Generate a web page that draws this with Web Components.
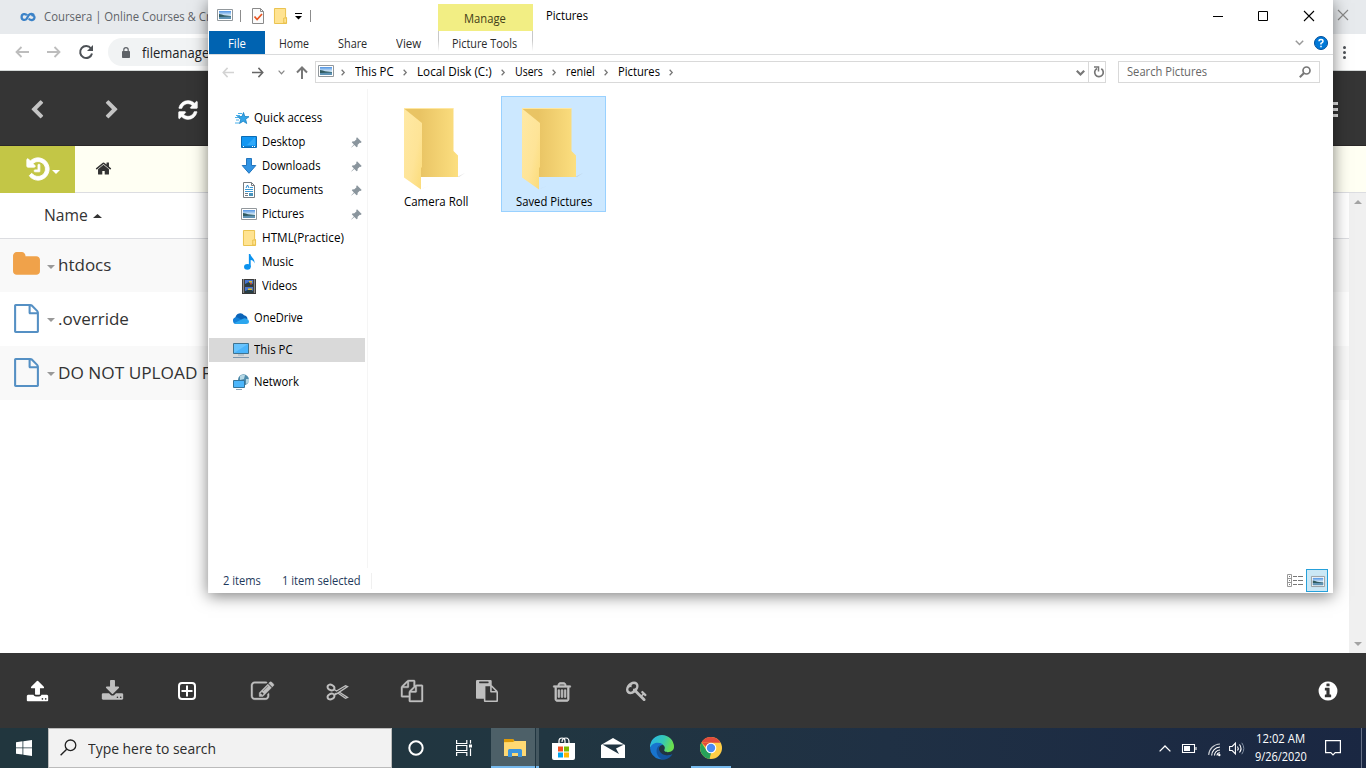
<!DOCTYPE html>
<html lang="en">
<head>
<meta charset="utf-8">
<title>Pictures</title>
<style>
html,body{margin:0;width:1366px;height:768px;overflow:hidden;background:#fff}
body{font-family:"Open Sans","Noto Sans",sans-serif;font-size:12px;color:#000}
</style>
</head>
<body>
<desktop-screen></desktop-screen>
<script>
const picture = `<defs><linearGradient id="s" x2="0" y2="1"><stop stop-color="#4f93e3"/><stop offset=".55" stop-color="#d9ecf8"/><stop offset="1" stop-color="#a9c8d2"/></linearGradient></defs><path d="M.5.5h15v11H.5z" fill="#fff" stroke="#92989c"/><path d="M2 2h12v8H2z" fill="url(#s)"/><path d="M2 5q3 .2 5 1.300l7 .700V8H2z" fill="#2f5a5f"/><path d="M2 8q6-.6 12-.5V10H2z" fill="#5f93b4"/>`;
const smallFolder = `<path d="M.5 .5h12v9h1v6H.5z" fill="#ffe391" stroke="#e9c14b"/><path d="M10.5 15V10h3v5z" fill="#ffe391" stroke="#e9c14b"/>`;
const fa = (d,s=0) => ['0 0 1792 1792', `<path fill="currentColor" ${s?`stroke="currentColor" stroke-width="${s}"`:''} d="${d}"/>`];
const ICONS = {
 picture:['0 0 16 12',picture],
 smallfolder:['0 0 14 16',smallFolder],
 check:['0 0 12 16','<path d="M.5.5h8l3 3v12H.5z" fill="#fbfbfb" stroke="#8a8a8a"/><path d="M8.5.5v3h3" fill="none" stroke="#8a8a8a"/><path d="M2.500 8.500l2.600 3L10 6" fill="none" stroke="#e8531f" stroke-width="1.700"/>'],
 menu:['0 0 7 7','<path d="M0 .5h7" stroke="#000"/><path d="M0 3h7L3.5 6.5z" fill="#000"/>'],
 chevleft:fa('M1427 301l-531 531 531 531q19 19 19 45t-19 45l-166 166q-19 19-45 19t-45-19l-742-742q-19-19-19-45t19-45l742-742q19-19 45-19t45 19l166 166q19 19 19 45t-19 45z'),
 chevright:fa('M1363 877l-742 742q-19 19-45 19t-45-19l-166-166q-19-19-19-45t19-45l531-531-531-531q-19-19-19-45t19-45l166-166q19-19 45-19t45 19l742 742q19 19 19 45t-19 45z'),
 refresh:fa('M1639 1056q0 5-1 7-64 268-268 434.5t-478 166.5q-146 0-282.5-55t-243.5-157l-129 129q-19 19-45 19t-45-19-19-45v-448q0-26 19-45t45-19h448q26 0 45 19t19 45-19 45l-137 137q71 66 161 102t187 36q134 0 250-65t186-179q11-17 53-117 8-23 30-23h192q13 0 22.5 9.5t9.5 22.5zm25-800v448q0 26-19 45t-45 19h-448q-26 0-45-19t-19-45 19-45l138-138q-148-137-349-137-134 0-250 65t-186 179q-11 17-53 117-8 23-30 23h-199q-13 0-22.5-9.5t-9.5-22.5v-7q65-268 270-434.5t480-166.5q146 0 284 55.5t245 156.5l130-129q19-19 45-19t45 19 19 45z',40),
 home:fa('M1472 992v480q0 26-19 45t-45 19h-384v-384h-256v384h-384q-26 0-45-19t-19-45v-480q0-1 .5-3t.5-3l575-474 575 474q1 2 1 6zm223-69l-62 74q-8 9-21 11h-3q-13 0-21-7l-692-577-692 577q-12 8-24 7-13-2-21-11l-62-74q-8-10-7-23.5t11-21.5l719-599q32-26 76-26t76 26l244 204v-195q0-14 9-23t23-9h192q14 0 23 9t9 23v408l219 182q10 8 11 21.5t-7 23.5z'),
 history:fa('M1664 896q0 156-61 298t-164 245-245 164-298 61q-172 0-327-72.5t-264-204.5q-7-10-6.5-22.5t8.5-20.5l137-138q10-9 25-9 16 2 23 12 73 95 179 147t225 52q104 0 198.5-40.5t163.5-109.5 109.5-163.5 40.5-198.5-40.5-198.5-109.5-163.5-163.5-109.5-198.5-40.5q-98 0-188 35.5t-160 101.5l137 138q31 30 14 69-17 40-59 40h-448q-26 0-45-19t-19-45v-448q0-42 40-59 39-17 69 14l130 129q107-101 244.5-156.5t284.5-55.5q156 0 298 61t245 164 164 245 61 298zm-640-288v448q0 14-9 23t-23 9h-320q-14 0-23-9t-9-23v-64q0-14 9-23t23-9h224v-352q0-14 9-23t23-9h64q14 0 23 9t9 23z',60),
 folder:fa('M1728 608v704q0 92-66 158t-158 66h-1216q-92 0-158-66t-66-158v-960q0-92 66-158t158-66h320q92 0 158 66t66 158v32h672q92 0 158 66t66 158z'),
 file:fa('M1596 380q28 28 48 76t20 88v1152q0 40-28 68t-68 28h-1344q-40 0-68-28t-28-68v-1600q0-40 28-68t68-28h896q40 0 88 20t76 48zm-444-244v376h376q-10-29-22-41l-313-313q-12-12-41-22zm384 1528v-1024h-416q-40 0-68-28t-28-68v-416h-768v1536h1280z'),
 info:fa('M1152 1376v-160q0-14-9-23t-23-9h-96v-512q0-14-9-23t-23-9h-320q-14 0-23 9t-9 23v160q0 14 9 23t23 9h96v320h-96q-14 0-23 9t-9 23v160q0 14 9 23t23 9h448q14 0 23-9t9-23zm-128-896v-160q0-14-9-23t-23-9h-192q-14 0-23 9t-9 23v160q0 14 9 23t23 9h192q14 0 23-9t9-23zm640 416q0 209-103 385.5t-279.5 279.5-385.5 103-385.5-103-279.5-279.5-103-385.5 103-385.5 279.5-279.5 385.5-103 385.5 103 279.5 279.5 103 385.5z'),
 trash:fa('M704 736v576q0 14-9 23t-23 9h-64q-14 0-23-9t-9-23v-576q0-14 9-23t23-9h64q14 0 23 9t9 23zm256 0v576q0 14-9 23t-23 9h-64q-14 0-23-9t-9-23v-576q0-14 9-23t23-9h64q14 0 23 9t9 23zm256 0v576q0 14-9 23t-23 9h-64q-14 0-23-9t-9-23v-576q0-14 9-23t23-9h64q14 0 23 9t9 23zm128 724v-948h-896v948q0 22 7 40.5t14.5 27 10.5 8.5h832q3 0 10.5-8.5t14.5-27 7-40.5zm-672-1076h448l-48-117q-7-9-17-11h-317q-10 2-17 11zm928 32v64q0 14-9 23t-23 9h-96v948q0 83-47 143.5t-113 60.5h-832q-66 0-113-58.5t-47-141.5v-952h-96q-14 0-23-9t-9-23v-64q0-14 9-23t23-9h309l70-167q15-37 54-63t79-26h320q40 0 79 26t54 63l70 167h309q14 0 23 9t9 23z',55),
 upload:fa('M1344 1472q0-26-19-45t-45-19-45 19-19 45 19 45 45 19 45-19 19-45zm256 0q0-26-19-45t-45-19-45 19-19 45 19 45 45 19 45-19 19-45zm128-224v320q0 40-28 68t-68 28h-1472q-40 0-68-28t-28-68v-320q0-40 28-68t68-28h427q21 56 70.5 92t110.5 36h256q61 0 110.5-36t70.5-92h427q40 0 68 28t28 68zm-325-648q-17 40-59 40h-256v448q0 26-19 45t-45 19h-256q-26 0-45-19t-19-45v-448h-256q-42 0-59-40-17-39 14-69l448-448q18-19 45-19t45 19l448 448q31 30 14 69z'),
 download:fa('M1344 1344q0-26-19-45t-45-19-45 19-19 45 19 45 45 19 45-19 19-45zm256 0q0-26-19-45t-45-19-45 19-19 45 19 45 45 19 45-19 19-45zm128-224v320q0 40-28 68t-68 28h-1472q-40 0-68-28t-28-68v-320q0-40 28-68t68-28h465l135 136q58 56 136 56t136-56l136-136h464q40 0 68 28t28 68zm-325-569q17 41-14 70l-448 448q-18 19-45 19t-45-19l-448-448q-31-29-14-70 17-39 59-39h256v-448q0-26 19-45t45-19h256q26 0 45 19t19 45v448h256q42 0 59 39z'),
 copy:fa('M1696 384q40 0 68 28t28 68v1216q0 40-28 68t-68 28h-960q-40 0-68-28t-28-68v-288h-544q-40 0-68-28t-28-68v-672q0-40 20-88t48-76l408-408q28-28 76-48t88-20h416q40 0 68 28t28 68v328q68-40 128-40h416zm-544 213l-299 299h299v-299zm-640-384l-299 299h299v-299zm196 647l316-316v-416h-384v416q0 40-28 68t-68 28h-416v640h512v-256q0-40 20-88t48-76zm956 804v-1152h-384v416q0 40-28 68t-68 28h-416v640h896z',30),
 paste:fa('M768 1664h896v-640h-416q-40 0-68-28t-28-68v-416h-384v1152zm256-1440v-64q0-13-9.5-22.5t-22.5-9.5h-704q-13 0-22.5 9.5t-9.5 22.5v64q0 13 9.5 22.5t22.5 9.5h704q13 0 22.5-9.5t9.5-22.5zm256 672h299l-299-299v299zm512 128v672q0 40-28 68t-68 28h-960q-40 0-68-28t-28-68v-160h-544q-40 0-68-28t-28-68v-1344q0-40 28-68t68-28h1088q40 0 68 28t28 68v328q21 13 36 28l408 408q28 28 48 76t20 88z'),
 key:fa('M832 512q0-80-56-136t-136-56-136 56-56 136q0 42 19 83-41-19-83-19-80 0-136 56t-56 136 56 136 136 56 136-56 56-136q0-42-19-83 41 19 83 19 80 0 136-56t56-136zm851 704q0 17-49 66t-66 49q-9 0-28.5-16t-36.5-33-38.5-40-24.5-26l-96 96 220 220q28 28 28 68 0 42-39 81t-81 39q-40 0-68-28l-671-671q-176 131-365 131-163 0-265.5-102.5t-102.5-265.5q0-160 95-313t248-248 313-95q163 0 265.5 102.5t102.5 265.5q0 189-131 365l355 355 96-96q-3-3-26-24.5t-40-38.5-33-36.5-16-28.5q0-17 49-66t66-49q13 0 23 10 6 6 46 44.5t82 79.5 86.5 86 73 78 28.5 41z'),
 edit:fa('M888 1184l116-116-152-152-116 116v56h96v96h56zm440-720q-16-16-33 1l-350 350q-17 17-1 33t33-1l350-350q17-17 1-33zm80 594v190q0 119-84.5 203.5t-203.5 84.5h-832q-119 0-203.5-84.5t-84.5-203.5v-832q0-119 84.5-203.5t203.5-84.5h832q63 0 117 25 15 7 18 23 3 17-9 29l-49 49q-14 14-32 8-23-6-45-6h-832q-66 0-113 47t-47 113v832q0 66 47 113t113 47h832q66 0 113-47t47-113v-126q0-13 9-22l64-64q15-15 35-7t20 29zm-96-738l288 288-672 672h-288v-288zm444 132l-92 92-288-288 92-92q28-28 68-28t68 28l152 152q28 28 28 68t-28 68z',30),
 plussq:['0 0 18 18','<rect x="1" y="1" width="16" height="16" rx="3" fill="none" stroke="currentColor" stroke-width="2"/><path d="M9 3.500v11M3.500 9h11" stroke="currentColor" stroke-width="2"/>'],
 cut:['0 0 22 18','<g fill="none" stroke="currentColor"><ellipse cx="5" cy="4.500" rx="3.600" ry="2.700" stroke-width="2" transform="rotate(25 5 4.500)"/><ellipse cx="5" cy="13.500" rx="3.600" ry="2.700" stroke-width="2" transform="rotate(-25 5 13.500)"/><path d="M8 6.300L10.500 8l9-5.200 2 .8-10.500 7-3 1.500M8 11.700l2.500-1.700M11.500 9.800l8 5.400 2-.8-8-5.200" stroke-width="1.300"/></g>'],
 coursera:['0 0 16 10','<path d="M14 3C12.500 1.300 10 1.500 8.600 3.300L6.800 6.500C5.500 8.800 1.600 8.300 1.600 5S5.500 1.300 7 3.300M8.800 6.500C10 8.700 14.300 8.700 14.500 5.300C14.500 3.500 12.500 2.800 11.300 3.600" fill="none" stroke="#3c83c8" stroke-width="2.300"/>'],
 arrowl:['0 0 14 12','<path d="M14 6H1.500M6.500 1L1.500 6l5 5" fill="none" stroke="currentColor" stroke-width="1.800"/>'],
 arrowr:['0 0 14 12','<path d="M0 6h12.500M7.500 1l5 5-5 5" fill="none" stroke="currentColor" stroke-width="1.800"/>'],
 reload:['0 0 14 14','<path d="M12 3.500A6 6 0 1 0 13 8.500" fill="none" stroke="currentColor" stroke-width="2"/><path d="M14 0v6H8z" fill="currentColor"/>'],
 lock:['0 0 8 11','<rect y="4" width="8" height="7" rx=".8" fill="currentColor"/><path d="M1.800 4V2.800a2.200 2.200 0 0 1 4.400 0V4" fill="none" stroke="currentColor" stroke-width="1.200"/>'],
 up:['0 0 12 13','<path d="M6 13V1.500M1 6.500l5-5 5 5" fill="none" stroke="currentColor" stroke-width="2"/>'],
 cr:['0 0 5 8','<path d="M.8.800L4 4 .8 7.200" fill="none" stroke="currentColor" stroke-width="1.600"/>'],
 cd:['0 0 9 6','<path d="M.8.800L4.500 4.500 8.200.800" fill="none" stroke="currentColor" stroke-width="var(--sw,1.500)"/>'],
 cu:['0 0 12 7','<path d="M.6 6.400L6 1l5.400 5.400" fill="none" stroke="currentColor" stroke-width="1.300"/>'],
 winreload:['0 0 11 12','<path d="M4 2.500A4.300 4.300 0 1 0 8.300 2.700" fill="none" stroke="currentColor" stroke-width="1.700"/><path d="M1 1h4.500v4.500" fill="none" stroke="currentColor" stroke-width="1.500"/>'],
 mag:['0 0 12 12','<circle cx="7.500" cy="4.500" r="3.500" fill="none" stroke="currentColor" stroke-width="1.700"/><path d="M5 7L.8 11.200" stroke="currentColor" stroke-width="2"/>'],
 bigmag:['0 0 17 17','<circle cx="10.500" cy="6.300" r="5.300" fill="none" stroke="currentColor" stroke-width="1.300"/><path d="M6.700 10.200L.6 16.300" stroke="currentColor" stroke-width="1.400"/>'],
 min:['0 0 10 10','<path d="M0 5.500h10" stroke="currentColor"/>'],
 max:['0 0 10 10','<path d="M.5.500h9v9h-9z" fill="none" stroke="currentColor"/>'],
 close:['0 0 10 10','<path d="M0 0l10 10M10 0L0 10" stroke="currentColor" stroke-width="1.100"/>'],
 help:['0 0 14 14','<circle cx="7" cy="7" r="6.500" fill="#0078d7" stroke="#004e9a"/><path d="M5 5.200Q5 3.500 7 3.500T9 5.200Q9 6.200 7 7.300V8.500M7 9.700v1.500" fill="none" stroke="#fff" stroke-width="1.500"/>'],
 star:['0 0 14 13','<path d="M8.500.5l1.300 4 4.200.2-3.400 2.600 1.100 4.200-3.500-2.300-3.700 2.300 1.300-4.200L2.500 4.700l4.400-.2z" fill="#35a5e8" stroke="#1680c4" stroke-width=".8"/><path d="M3 1.500h4M1 3.500h4M0 5.500h3.500M1 8h3M0 11h4" stroke="#4ab0ea"/>'],
 desktop:['0 0 16 12','<path d="M.5.500h15v11H.5z" fill="#1297f3" stroke="#0b6cb5"/><path d="M14 1v8H6z" fill="#3fb0fb" opacity=".7"/><path d="M1 10.500h14" stroke="#0f7ccb"/><path d="M2 10.500h1M11 10.500h1M13 10.500h1" stroke="#fff"/>'],
 down:['0 0 16 16','<path d="M5.500.5h5v7h4.300L8 15.300 1.200 7.500h4.300z" fill="#3294e4" stroke="#2275bd"/>'],
 doc:['0 0 12 16','<path d="M.5.5h8l3 3v12H.5z" fill="#fff" stroke="#777d82"/><path d="M8.500.5v3h3" fill="none" stroke="#777d82"/><path d="M3 6l1.500-3L6 6" fill="none" stroke="#2687cc"/><path d="M7 5.500h3M2 7.500h8M2 9.500h8" stroke="#3a99d6"/><path d="M2 11.500h3M2 13.500h3" stroke="#707c85"/><path d="M6 11h4v3H6z" fill="#4793bd"/>'],
 music:['0 0 12 16','<ellipse cx="3.700" cy="12.800" rx="3.700" ry="2.900" fill="#0b92ee"/><path d="M5.300 13V0h1.600c.3 3.200 5.200 4 4.600 9.500-.6-2.500-2-3.200-4.200-3.500V13z" fill="#0b92ee"/>'],
 video:['0 0 14 15','<path d="M0 0h14v15H0z" fill="#393939"/><path d="M1.500.500v14M12.500.500v14" stroke="#dedede" stroke-width="1.200" stroke-dasharray="1 1"/><path d="M3 1h8v6H3zM3 8h8v6H3z" fill="#4775cf"/><path d="M3 5l4-2 4 2v2H3zM3 12l5-2 3 2v2H3z" fill="#263e45"/><path d="M7 2h3v1.500H7zM6 9.500h4v1.500H6z" fill="#ddbd32"/><path d="M8 4h2v1.500H8z" fill="#c34b38"/>'],
 onedrive:['0 0 16 11','<path d="M2.500 4.500A4.700 4.700 0 0 1 11 2.300 4 4 0 0 1 14.500 6L8 9 0 8A3.500 3.500 0 0 1 2.500 4.500z" fill="#0b64b8"/><path d="M0 7.500A3.200 3.200 0 0 1 4.500 4.600L14 9.500 12.800 11H3.300Q0 11 0 7.500z" fill="#1480d8"/><path d="M1.500 10l8.500-4.300q2-.9 3.500.1Q16 6.300 16 8.500 16 11 13 11H3.300q-1 0-1.800-1z" fill="#2ba6ee"/>'],
 pc:['0 0 16 15','<path d="M.5.500h15v10H.5z" fill="#4ab4fb" stroke="#41738f"/><path d="M1 1h14L1 10z" fill="#7ccdff" opacity=".6"/><path d="M5 12h6" stroke="#9bb0bf"/><path d="M0 14.500h16" stroke="#7e97ad"/>'],
 network:['0 0 16 16','<circle cx="10.500" cy="5.800" r="5.500" fill="#4e8bab"/><path d="M7 2q3-2 5-1l-1 4-4 1zM13 5h3v3l-3 2z" fill="#b6d8e5"/><path d="M.5 6.500h11v7H.5z" fill="#4cb6fb" stroke="#33749b"/><path d="M3 15.500h6" stroke="#8ea5b5"/>'],
 pin:['0 0 11 11','<path d="M6 .3L10.700 5 9.500 6 8.800 5.700 6.700 7.800 6.500 9.800 5.600 10.200 3.300 7.900.6 10.500.3 10.200 2.900 7.500.8 5.300 1.300 4.400 3.400 4.300 5.500 2.200 5.200 1.300z" fill="#8a959d"/>'],
 bigfolder:['0 0 62 82','<defs><linearGradient id="b" x1="0" x2="1"><stop stop-color="#e9c464"/><stop offset=".3" stop-color="#e9c464"/><stop offset="1" stop-color="#fcdf80"/></linearGradient><linearGradient id="f" x1="0" x2="1" y2="1"><stop stop-color="#ffe9a4"/><stop offset=".6" stop-color="#fee497"/><stop offset="1" stop-color="#fbdb78"/></linearGradient></defs><path d="M53 69l8-4-6 4zM17 81l8-3-5 2z" fill="#999" opacity=".3"/><path d="M0 .5h49.500V43l4.500 4.500V69H0z" fill="url(#b)"/><path d="M0 .500h49.500" stroke="#ffe7a0"/><path d="M0 .500L18 15V59l-1 1V81.500L0 69.500z" fill="url(#f)"/>'],
 listview:['0 0 16 13','<path d="M.5.500h4v12h-4zM.5 4.500h4M.5 8.500h4" fill="none" stroke="#999"/><path d="M2 2.500h1M2 6.500h1M2 10.500h1M6 2.500h4M11 2.500h5M6 6.500h4M11 6.500h5M6 10.500h4M11 10.500h5" stroke="#777"/>'],
 win:['0 0 16 16','<path d="M0 2.200l6.500-.9v6.200H0zM7.300 1.200L16 0v7.500H7.300zM0 8.300h6.500v6.300L0 13.700zM7.300 8.300H16V16l-8.700-1.300z" fill="#fff"/>'],
 cortana:['0 0 16 16','<circle cx="8" cy="8" r="6.700" fill="none" stroke="#fff" stroke-width="2"/>'],
 taskview:['0 0 16 16','<path d="M.6 0v3.500h10.200V0M.6 16v-3.500h10.200V16M.6 5.500h10.200v5H.6zM14.500 0v3.500M14.500 8.500V16" fill="none" stroke="#fff" stroke-width="1.200"/><path d="M13 4.500h3v3h-3z" fill="#fff"/>'],
 explorer:['0 0 22 18','<path d="M0 0h9l1.500 2H22v15H0z" fill="#f9c83f"/><path d="M0 3.500L10 3l1-1h11v15H0z" fill="#ffd973"/><path d="M0 0h9l1 2-1 1H0z" fill="#dd9a08"/><path d="M4 18v-6.500q0-1.500 1.500-1.500h11q1.500 0 1.500 1.500V18h-4v-4H8v4z" fill="#3d95dc"/>'],
 store:['0 0 23 23','<path d="M0 6h23v15q0 2-2 2H2q-2 0-2-2z" fill="#fff"/><path d="M7 8V4q0-3 3-3t3 3v4M10 5q0-4 4-4 3 0 3 4v3" fill="none" stroke="#fff" stroke-width="1.200"/><path d="M6 9.500h5v5H6z" fill="#f25022"/><path d="M12 9.500h5v5h-5z" fill="#7fba00"/><path d="M6 15.500h5v5H6z" fill="#00a4ef"/><path d="M12 15.500h5v5h-5z" fill="#ffb900"/>'],
 mail:['0 0 24 20','<path d="M0 7L12 0l12 7v13H0z" fill="#fff"/><path d="M1.500 6.500H23l-8 4 3 5.500-8-4.500z" fill="#203542"/>'],
 edge:['0 0 24 24','<defs><linearGradient id="t" x2="1" y2=".3"><stop stop-color="#27b4ed"/><stop offset=".6" stop-color="#35c8b5"/><stop offset="1" stop-color="#69df50"/></linearGradient></defs><path d="M0 11A12 12 0 0 1 24 11c0 5-7 6.500-9.500 4-1-1 .5-1.500.3-3.500C14.500 7 4 5 0 12z" fill="url(#t)"/><path d="M0 12C2 5.500 11 5.500 13 9c-4-.5-5 4-3.500 7 2 4 8 5.500 12.500 2A12 12 0 0 1 0 12z" fill="#1874ce"/><path d="M10 9C5 11 5 22 14 23.700 18 23 21 21 22.500 18c-5 3-11 1-13-3-1-2-.5-4 .5-6z" fill="#13549f"/>'],
 chrome:['0 0 24 24','<circle cx="12" cy="12" r="11" fill="#ffcd46"/><path d="M2.500 6.500A11 11 0 0 1 21.600 6.800H12z" fill="#e14b3c"/><path d="M2.500 6.500L7.500 14.500 12 17l-1.500 5.900A11 11 0 0 1 2.500 6.500z" fill="#27a25a"/><path d="M2.500 6.500L8 12l4-5z" fill="#e14b3c"/><circle cx="12" cy="12" r="5.300" fill="#fff"/><circle cx="12" cy="12" r="4.200" fill="#4b8bf4"/>'],
 battery:['0 0 15 9','<path d="M.5.500h12v8H.5zM14 3v3" fill="none" stroke="#fff" stroke-width="1.100"/><path d="M2 2h6v5H2z" fill="#fff"/>'],
 wifi:['0 0 13 13','<g fill="none" stroke="#fff" stroke-width="1.100"><path d="M.7 12A11.500 11.500 0 0 1 12 1" opacity=".75"/><path d="M3.700 12.500A8.500 8.500 0 0 1 12 4M6.500 12.500A5.500 5.500 0 0 1 12 7"/><path d="M9 12.500A3 3 0 0 1 12 9.700"/></g><circle cx="11.300" cy="12" r="1.200" fill="#fff"/>'],
 sound:['0 0 17 13','<path d="M.6 4.500h2.600L6.400 1.200v10.600L3.200 8.500H.6z" fill="none" stroke="#fff" stroke-width="1.100"/><path d="M8.500 4.500q1.500 2 0 4M10.500 2.500q3 4 0 8" fill="none" stroke="#fff" stroke-width="1.100"/><path d="M12.800.800q4 5.700 0 11.400" fill="none" stroke="#8290a3"/>'],
 notif:['0 0 16 16','<path d="M.6.600h14.800v12h-5.200L8 14.800 5.800 12.600H.6z" fill="none" stroke="#fff" stroke-width="1.200"/>'],
 dots:['0 0 3 13','<g fill="#4d5156"><circle cx="1.500" cy="1.500" r="1.500"/><circle cx="1.500" cy="6.500" r="1.500"/><circle cx="1.500" cy="11.500" r="1.500"/></g>'],
 bars:['0 0 18 15','<path d="M0 1.500h18M0 7.500h18M0 13.500h18" stroke="#e6e6e6" stroke-width="3"/>'],
 td:['0 0 8 4','<path d="M0 0h8L4 4z" fill="currentColor"/>'],
 tu:['0 0 8 4','<path d="M0 4h8L4 0z" fill="currentColor"/>']
};

class UiIcon extends HTMLElement{
  constructor(){super();this.attachShadow({mode:'open'});}
  connectedCallback(){
    const [box,body]=ICONS[this.getAttribute('name')];
    const w=this.getAttribute('w'),h=this.getAttribute('h')||w;
    this.shadowRoot.innerHTML=`<style>:host{display:block;flex:none;width:${w}px;height:${h}px}svg{display:block}</style><svg width="${w}" height="${h}" viewBox="${box}" preserveAspectRatio="none" overflow="visible">${body}</svg>`;
  }
}
customElements.define('ui-icon',UiIcon);

/* A label of a set width: its glyphs are condensed or widened to fill it. */
class FitText extends HTMLElement{
  constructor(){
    super();this.attachShadow({mode:'open'}).innerHTML=`<style>:host{display:block;flex:none;white-space:nowrap}span{display:inline-block;transform-origin:0 50%}</style><span><slot></slot></span>`;
  }
  connectedCallback(){
    const w=+this.getAttribute('w'),s=this.shadowRoot.querySelector('span');
    this.style.width=w+'px';
    s.style.transform=`scaleX(${w/s.offsetWidth})`;
  }
}

const define=(tag,css,html)=>customElements.define(tag,class extends HTMLElement{
  constructor(){super();this.attachShadow({mode:'open'});}
  connectedCallback(){
    this.shadowRoot.innerHTML=`<style>*{box-sizing:border-box}${css}</style>`+(typeof html==='function'?html(this):html);
  }
});
const ic=(n,w,h,ml=0,c='',mt=0)=>`<ui-icon name="${n}" w="${w}" h="${h}" style="margin-left:${ml}px;margin-top:${mt}px;${c?'color:'+c:''}"></ui-icon>`;
const tx=(t,w,ml=0,st='')=>`<fit-text w="${w}" style="margin-left:${ml}px;${st}">${t}</fit-text>`;

define('file-row',`:host{display:flex;align-items:center;box-sizing:border-box;height:var(--h,54px);padding-bottom:2px;font-size:17px;color:#333;background:var(--bg,#fff)}.i{width:27px;display:flex;justify-content:center;margin-left:13px}fit-text{margin-left:3px}`,
 e=>{const f=e.getAttribute('kind')==='folder';return `<div class="i">${f?ic('folder',29,29,0,'#f0a24a'):ic('file',29,29,0,'#5590c4',1)}</div>${ic('td',8,4,7,'#999',4)}<fit-text w="${e.getAttribute('w')}">${e.getAttribute('label')}</fit-text>`;});

define('browser-page',`
:host{display:flex;flex-direction:column;height:728px;background:#fff}
.r{display:flex;align-items:center}
.tabs{height:34px;background:#e7eaed;color:#5f6368}
.bar{height:37px;border-bottom:1px solid #d5d9d8;background:#fff}
.url{display:flex;align-items:center;width:1180px;height:28px;border-radius:14px;background:#f1f3f4;margin-left:15px;font-size:14px;color:#202124}
.dark{height:75px;background:#353535;border-bottom:1px solid #2b2829}
.crumb{height:47px;background:#fffff3;border-bottom:1px solid #dcdde1}
.hist{width:75px;height:47px;background:#c3c646;color:#fff;margin-bottom:-1px}
.main{display:flex;height:460px}
.list{flex:1}
.head{height:46px;border-bottom:1px solid #dcdde1;font-size:16px;font-weight:500;color:#333;padding-bottom:1px}
.scroll{width:17px;background:#f0f0f0;display:flex;flex-direction:column;align-items:center;justify-content:space-between;padding:7px 0 7px}
.foot{height:75px;background:#353535;color:#bfbfbf}
.foot div{width:75px;display:flex;justify-content:center}
.grow{flex:1}`,
`<div class="r tabs">${ic('coursera',16,10,20,'',-1)}${tx('Coursera | Online Courses &amp; Cr',167,8,'margin-top:-1px')}<span class="grow"></span>${ic('close',10,10,0,'#888',-5)}<span style="width:18px"></span></div>
<div class="r bar">${ic('arrowl',14,12,15,'#bdbdbd')}${ic('arrowr',14,12,18,'#bdbdbd')}${ic('reload',14,14,18,'#4d5156')}<div class="url">${ic('lock',8,11,14,'#5f6368')}${tx('filemanage',67,12)}</div><span class="grow"></span>${ic('dots',3,13)}<span style="width:20px"></span></div>
<div class="r dark">${ic('chevleft',20,20,27,'#c4c4c4',4)}${ic('chevright',20,20,55,'#c4c4c4',4)}${ic('refresh',22,22,54.5,'#fff',4)}<span class="grow"></span>${ic('bars',18,15,0,'',3)}<span style="width:28px"></span></div>
<div class="r crumb"><div class="r hist">${ic('history',26,26,25,'',-1)}${ic('td',8,4,1,'',5)}</div>${ic('home',17,17,19.5,'#333',-1)}</div>
<div class="main"><div class="list"><div class="r head">${tx('Name',44,44)}${ic('tu',9,4,5,'#333',1)}</div>
<file-row kind="folder" label="htdocs" w="53" style="--bg:#f9f9f9;--h:53px"></file-row><file-row label=".override" w="71"></file-row><file-row label="DO NOT UPLOAD F" w="153" style="--bg:#f9f9f9"></file-row></div><div class="scroll">${ic('tu',8,4,0,'#a3a3a3')}${ic('td',8,4,0,'#a3a3a3')}</div></div>
<div class="r foot"><div>${ic('upload',23,23,0,'#fff',2)}</div><div>${ic('download',23,23,0,'',2)}</div><div>${ic('plussq',18,18,-1,'#fff')}</div><div>${ic('edit',23,23,0,'',2)}</div><div>${ic('cut',22,18,-1,'',2)}</div><div>${ic('copy',22,22,-1,'',1)}</div><div>${ic('paste',22,22,-1,'',1)}</div><div>${ic('trash',22,22,-1,'',2)}</div><div>${ic('key',22,22,-1,'',1)}</div><span class="grow"></span><div>${ic('info',22,22,-1,'#fff',1)}</div></div>`);

define('nav-item',`:host{display:flex;align-items:center;height:24px;width:156px;margin-bottom:var(--gap,0);background:var(--bg,none)}.i{width:16px;display:flex;justify-content:center;margin-left:24px;flex:none}:host([child]) .i{margin-left:32px}.g{flex:1}.p{margin-right:3px}`,
 e=>`<div class="i">${ic(...e.getAttribute('icon').split(',') )}</div><fit-text w="${e.getAttribute('w')}" style="margin:-2px 0 0 5px">${e.getAttribute('label')}</fit-text><span class="g"></span>${e.hasAttribute('pinned')?`<div class="p">${ic('pin',11,11,0,'',1)}</div>`:''}`);

define('folder-tile',`:host{display:flex;flex-direction:column;align-items:center;box-sizing:border-box;width:105px;height:116px;padding-top:11px;border:1px solid transparent}:host([selected]){background:#cce8ff;border-color:#99d1ff}fit-text{margin-top:3px}ui-icon{margin-right:2px}`,
 e=>`<ui-icon name="bigfolder" w="62" h="82"></ui-icon><fit-text w="${e.getAttribute('w')}">${e.getAttribute('label')}</fit-text>`);

const nav=(icon,label,w,extra='')=>`<nav-item icon="${icon}" label="${label}" w="${w}" ${extra}></nav-item>`;
define('explorer-window',`
:host{display:flex;flex-direction:column;box-sizing:border-box;position:absolute;left:208px;top:0;width:1125px;height:593px;background:#fff;border-left:1px solid #fbfbfb;box-shadow:0 3px 15px rgba(0,0,0,.5)}
.r{display:flex;align-items:center}
.title{height:31px}
.sep{width:1px;height:12px;background:#8c8c8c}
.manage{width:95px;height:27px;background:#f2ee84;align-self:flex-end;margin-left:127px;padding-top:1px;color:#434018}
.tabs{height:24px;border-bottom:1px solid #dadbdc;color:#2b2b2b}
.tabs fit-text{margin-top:1px}
.file{width:56px;height:23px;background:#0063b1;color:#fff}
.pt{width:95px;height:23px;margin-left:17px;border:1px solid;border-width:0 1px;border-image:linear-gradient(#c8c8c8 40%,#fff 85%) 1}
.nav{height:34px}
.addr{width:791px;height:22px;border:1px solid #d9d9d9;margin-left:7px;color:#000}
.nav fit-text{margin-top:-2px}
.re{width:17px;height:20px;border-left:1px solid #d9d9d9}
.search{width:202px;height:22px;border:1px solid #d9d9d9;margin-left:12px;color:#666}
.body{display:flex;height:479px}
.side{width:159px;padding-top:17px;border-right:1px solid #f5f5f5}
.tiles{display:flex;gap:13px;padding:7px 0 0 15px}
.status{height:25px;color:#1e395b}
.big{display:flex;align-items:center;justify-content:center;width:22px;height:23px;border:1px solid #26a0da;background:#cbe8f6}
.grow{flex:1}`,
`<div class="r title">${ic('picture',16,12,8,'',-1)}<i class="sep" style="margin-left:7px"></i>${ic('check',12,16,11,'',1)}${ic('smallfolder',13,16,10,'',1)}${ic('menu',7,7,8,'',2)}<i class="sep" style="margin-left:8px"></i><div class="r manage">${tx('Manage',42,26)}</div>${tx('Pictures',42,13)}<span class="grow"></span>${ic('min',10,10)}${ic('max',10,10,35)}${ic('close',10,10,36)}<span style="width:19px"></span></div>
<div class="r tabs"><div class="r file">${tx('File',18,19)}</div>${tx('Home',30,14)}${tx('Share',29,29)}${tx('View',25,29)}<div class="r pt">${tx('Picture Tools',65,13)}</div><span class="grow"></span>${ic('cd',9,6,0,'#999')}${ic('help',14,14,10)}<span style="width:5px"></span></div>
<div class="r nav">${ic('arrowl',12,11,13,'#d3d3d3')}${ic('arrowr',12,11,18,'#666')}${ic('cd',7,5,14,'#888')}${ic('up',12,13,11,'#777')}
<div class="r addr">${ic('picture',16,12,2,'',-2)}${ic('cr',4,7,7,'#777')}${tx('This PC',39,10)}${ic('cr',4,7,9,'#777')}${tx('Local Disk (C:)',75,10)}${ic('cr',4,7,9,'#777')}${tx('Users',28,10)}${ic('cr',4,7,9,'#777')}${tx('reniel',29,10)}${ic('cr',4,7,9,'#777')}${tx('Pictures',42,10)}${ic('cr',4,7,9,'#777')}<span class="grow"></span><ui-icon name="cd" w="9" h="6" style="--sw:2.200;color:#777;margin:2px 3px 0 0"></ui-icon><div class="r re">${ic('winreload',11,12,4,'#777')}</div></div>
<div class="r search">${tx('Search Pictures',80,8)}<span class="grow"></span>${ic('mag',12,12,0,'#777')}<span style="width:8px"></span></div></div>
<div class="body"><div class="side">
${nav('star,14,13,1','Quick access',68)}${nav('desktop,16,12','Desktop',43,'child pinned')}${nav('down,16,16','Downloads',59,'child pinned')}${nav('doc,12,16','Documents',61,'child pinned')}${nav('picture,16,12','Pictures',42,'child pinned')}${nav('smallfolder,13,16','HTML(Practice)',82,'child')}${nav('music,11,16','Music',32,'child')}${nav('video,14,15','Videos',35,'child style="--gap:8px"')}${nav('onedrive,16,11','OneDrive',49,'style="--gap:8px"')}${nav('pc,16,15','This PC',39,'style="--gap:8px;--bg:#d9d9d9"')}${nav('network,16,16','Network',45)}
</div><div class="tiles"><folder-tile label="Camera Roll" w="64"></folder-tile><folder-tile selected label="Saved Pictures" w="76"></folder-tile></div></div>
<div class="r status">${tx('2 items',38,14)}${tx('1 item selected',79,21)}<i style="width:1px;height:16px;background:#f0f0f0;margin-left:10px"></i><span class="grow"></span>${ic('listview',16,13,0,'',-1)}<span style="width:3px"></span><div class="big">${ic('picture',14,11,1,'',1)}</div><span style="width:5px"></span></div>`);

define('task-bar',`
:host{display:flex;align-items:center;height:40px;background:linear-gradient(90deg,#21363e,#213641 40%,#1f3044 65%,#1a2742);color:#fff}
.s{width:344px;height:40px;background:#f2f2f2;border:1px solid #bbb;margin-left:16px;display:flex;align-items:center;color:#2c2c2c;font-size:15px}
.app{height:40px;display:flex;align-items:center;justify-content:center}
.on{border-bottom:2px solid #76b9ed;padding-top:2px}
.clock{display:flex;flex-direction:column;align-items:center;width:52px;margin-left:9px;line-height:18px}
.grow{flex:1}`,
`${ic('win',16,16,16)}<div class="s">${ic('bigmag',17,17,11,'#222',-1)}${tx('Type here to search',128,11)}</div>
<div class="app" style="width:48px">${ic('cortana',16,16)}</div><div class="app" style="width:48px">${ic('taskview',16,16)}</div><div class="app on" style="width:44px;margin-left:3px;background:#4d6068">${ic('explorer',22,18,3)}</div><div class="app on" style="width:3px;margin-left:1px;background:#445760"></div><div class="app" style="width:49px">${ic('store',23,23,-1)}</div><div class="app" style="width:49px">${ic('mail',24,20,0,'',-1)}</div><div class="app" style="width:49px">${ic('edge',24,24)}</div><div class="app on" style="width:40px;margin-left:5px">${ic('chrome',24,24)}</div>
<span class="grow"></span>${ic('cu',12,7)}${ic('battery',15,9,11,'',1)}${ic('wifi',13,13,11,'',2)}${ic('sound',17,13,8)}<div class="clock">${tx('12:02 AM',49,-2)}${tx('9/26/2020',52)}</div>${ic('notif',16,16,18)}<i style="width:1px;height:40px;background:#667086;margin:0 4px 0 20px"></i>`);

define('desktop-screen',`:host{display:block;position:relative;width:1366px;height:768px;overflow:hidden;font-family:"Open Sans","Noto Sans",sans-serif}`,`<browser-page></browser-page><explorer-window></explorer-window><task-bar></task-bar>`);
customElements.define('fit-text',FitText);
</script>
</body>
</html>
